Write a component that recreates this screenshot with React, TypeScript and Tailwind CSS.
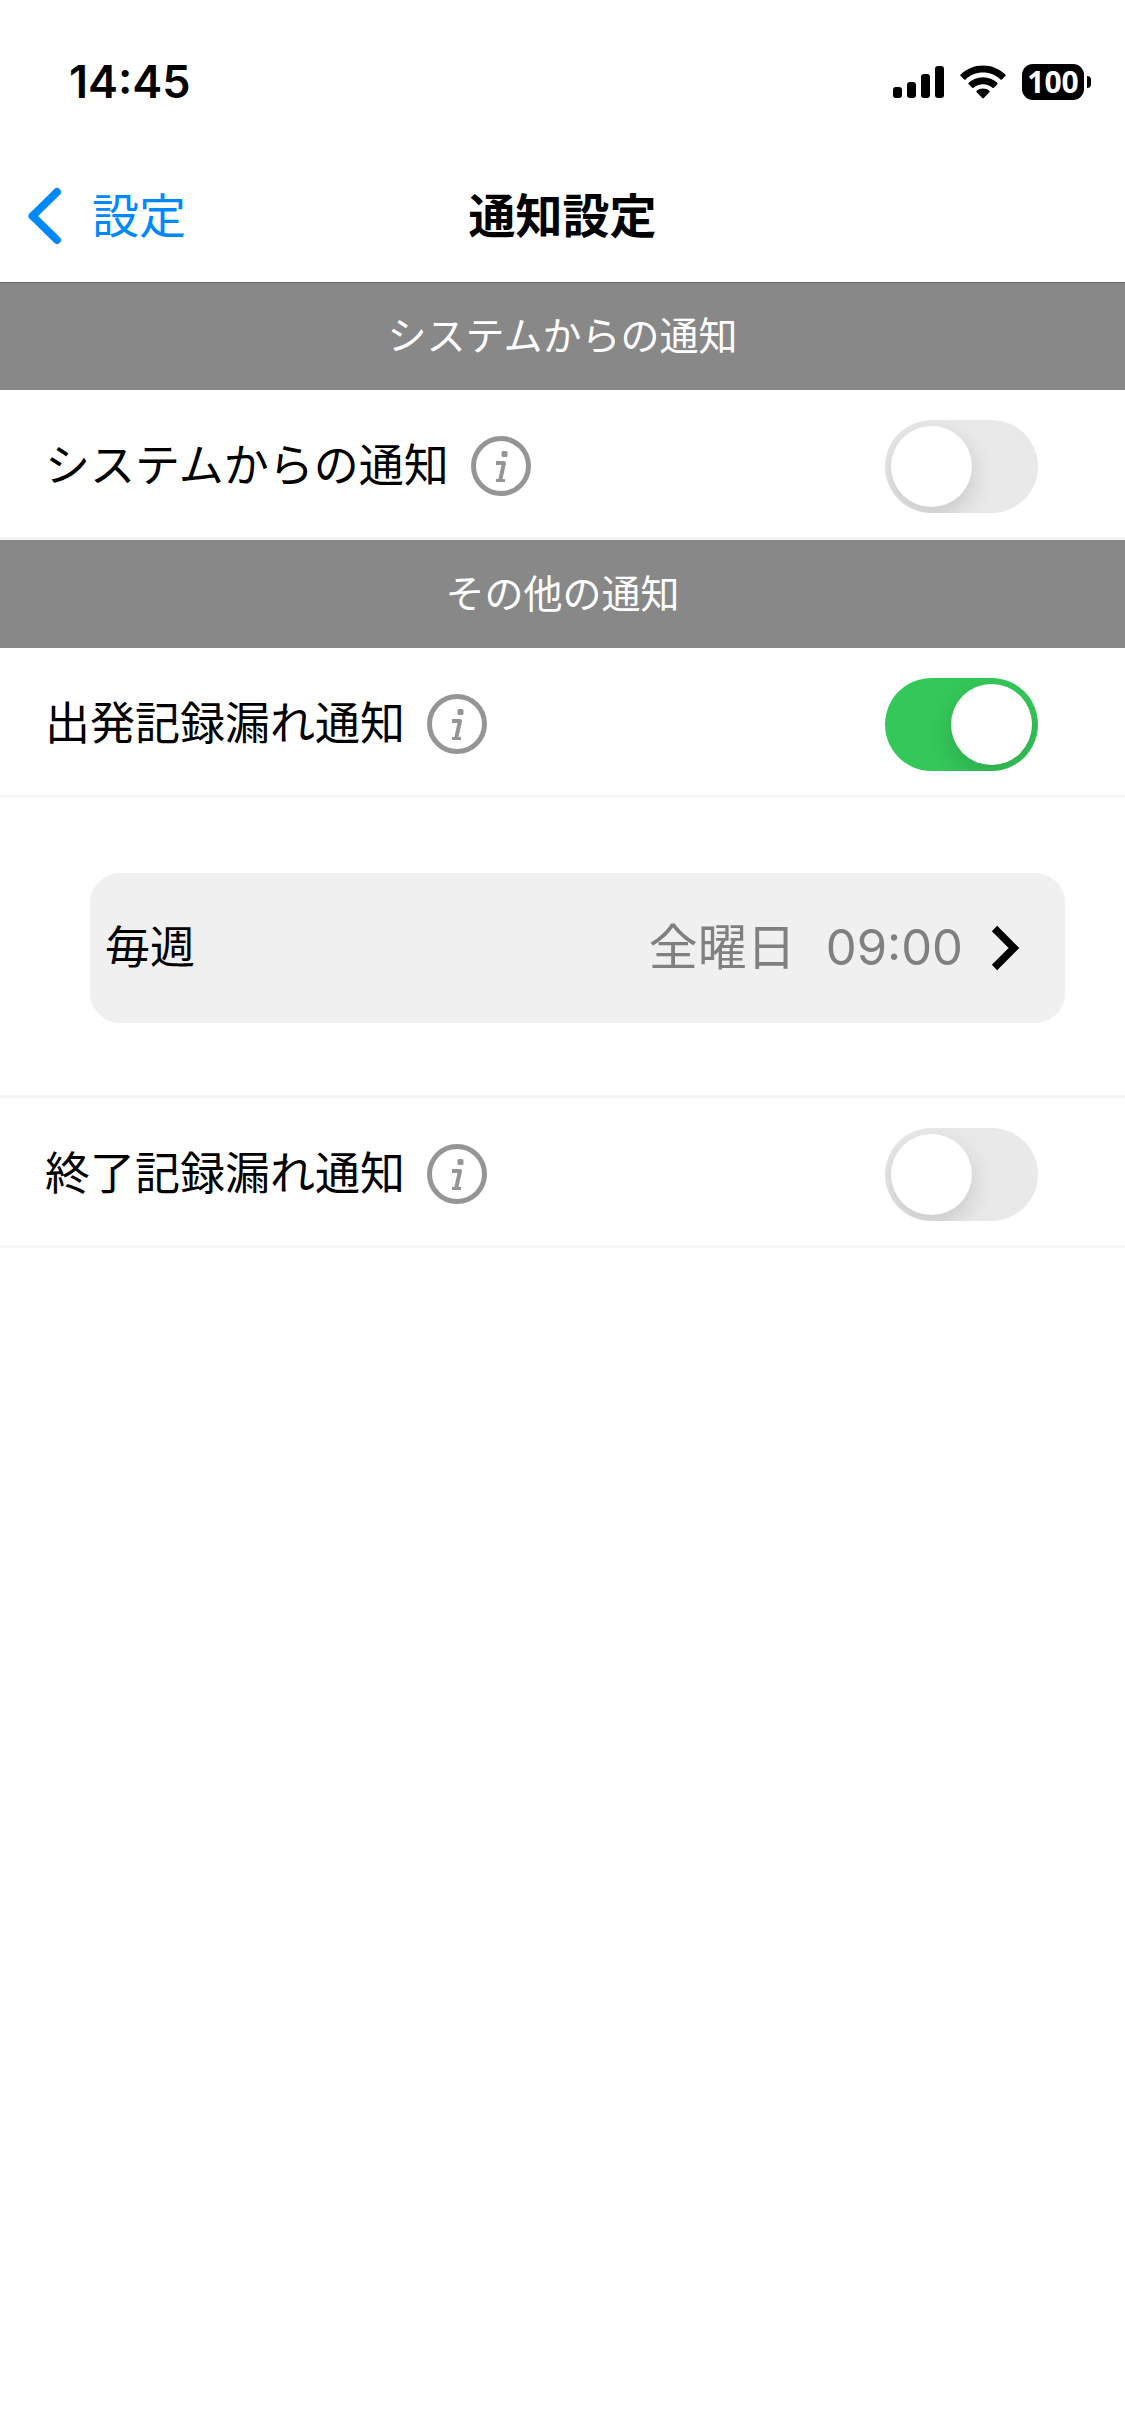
import React, { useId, useState } from 'react';

interface SwitchProps {
  id: string;
  checked: boolean;
  onChange: (checked: boolean) => void;
}

interface SettingRowProps {
  label: string;
  defaultChecked?: boolean;
  children?: React.ReactNode;
}

function SignalIcon() {
  return (
    <svg className="w-[52px] h-[34px]" viewBox="0 0 52 34" aria-hidden="true">
      <rect x="1" y="22" width="9" height="11" rx="3" />
      <rect x="15" y="17" width="9" height="16" rx="3" />
      <rect x="29" y="9" width="9" height="24" rx="3" />
      <rect x="43" y="1" width="9" height="32" rx="3" />
    </svg>
  );
}

function WifiIcon() {
  return (
    <svg className="w-[46px] h-[34px]" viewBox="0 0 46 34" aria-hidden="true">
      <path d="M23 0.5C14.4 0.5 6.500 3.900 0.700 9.500a1 1 0 0 0 0 1.500l3.500 3.500a1 1 0 0 0 1.400 0C10.200 10.200 16.300 7.600 23 7.600s12.800 2.600 17.400 6.900a1 1 0 0 0 1.400 0l3.500-3.500a1 1 0 0 0 0-1.500C39.500 3.900 31.600 0.500 23 0.500Z" />
      <path d="M23 12.200c-5.500 0-10.500 2.100-14.300 5.500a1 1 0 0 0 0 1.500l3.500 3.500a1 1 0 0 0 1.400 0c2.500-2.200 5.800-3.500 9.400-3.500s6.900 1.300 9.400 3.500a1 1 0 0 0 1.400 0l3.500-3.500a1 1 0 0 0 0-1.500C33.500 14.300 28.500 12.200 23 12.200Z" />
      <path d="M23 23.600c-2.400 0-4.600 0.800-6.300 2.200a1 1 0 0 0 0 1.500l5.500 5.700a1.100 1.100 0 0 0 1.600 0l5.500-5.700a1 1 0 0 0 0-1.500c-1.700-1.400-3.900-2.200-6.300-2.200Z" />
    </svg>
  );
}

function Battery() {
  return (
    <div className="flex items-center gap-[3px]">
      <div className="flex h-9 w-[62px] items-center justify-center rounded-[11px] bg-black font-['Open_Sans',sans-serif] text-[30px] leading-9 font-bold text-white">
        100
      </div>
      <div className="h-3 w-1 rounded-r-full bg-black" />
    </div>
  );
}

function StatusBar() {
  return (
    <div className="flex h-[150px] items-center justify-between pt-[14px] pr-[34px] pl-[69px]">
      <span className="text-[45px] leading-[52px] font-semibold">14:45</span>
      <div className="flex items-center gap-4">
        <SignalIcon />
        <WifiIcon />
        <Battery />
      </div>
    </div>
  );
}

function NavBar() {
  return (
    <header className="relative grid h-[132px] grid-cols-[1fr_auto_1fr] items-center shadow-[0_1px_0_#6b6b6b]">
      <a href="#settings" className="flex items-center gap-[30px] pl-7 text-[#0088ff]">
        <svg className="h-[58px] w-[34px]" viewBox="0 0 34 58" fill="none" aria-hidden="true">
          <path
            d="M29 5L4.500 29L29 53"
            stroke="currentColor"
            strokeWidth="8"
            strokeLinecap="round"
            strokeLinejoin="round"
          />
        </svg>
        <span className="text-[47px] leading-[60px]">設定</span>
      </a>
      <h1 className="text-[47px] leading-[60px] font-bold">通知設定</h1>
    </header>
  );
}

function SectionTitle({ children }: { children: React.ReactNode }) {
  return (
    <h2 className="flex h-[108px] items-center justify-center bg-[#888888] text-[39px] leading-[60px] text-white">
      {children}
    </h2>
  );
}

function InfoButton({ label }: { label: string }) {
  return (
    <button type="button" aria-label={`${label}の説明`} className="text-[#959595]">
      <svg className="size-[60px]" viewBox="0 0 60 60" fill="none" aria-hidden="true">
        <circle cx="30" cy="30" r="27.500" stroke="currentColor" strokeWidth="5" />
        <rect x="30.500" y="15" width="6" height="6" rx="1.500" fill="currentColor" />
        <path
          d="M25 27h8l-4 18"
          stroke="currentColor"
          strokeWidth="4"
          strokeLinejoin="round"
        />
        <path d="M25 44.500h9" stroke="currentColor" strokeWidth="3" />
      </svg>
    </button>
  );
}

function Switch({ id, checked, onChange }: SwitchProps) {
  return (
    <input
      id={id}
      type="checkbox"
      role="switch"
      checked={checked}
      onChange={(e) => onChange(e.target.checked)}
      className="h-[93px] w-[153px] cursor-pointer appearance-none overflow-hidden rounded-full bg-[#e9e9e9] p-[6px] before:block before:size-[81px] before:rounded-full before:bg-white before:shadow-[0_9px_24px_rgba(0,0,0,0.15)] checked:bg-[#34c759] checked:before:ml-[60px]"
    />
  );
}

function SettingRow({ label, defaultChecked = false, children }: SettingRowProps) {
  const id = useId();
  const [checked, setChecked] = useState(defaultChecked);

  return (
    <>
      <div className="flex h-[150px] items-center border-b-3 border-[#f5f5f5] pt-[5px] pr-[87px] pl-[45px]">
        <label htmlFor={id} className="text-[45px] leading-[60px]">
          {label}
        </label>
        <div className="ml-[22px] flex flex-1 items-center justify-between">
          <InfoButton label={label} />
          <Switch id={id} checked={checked} onChange={setChecked} />
        </div>
      </div>
      {checked && children}
    </>
  );
}

function ScheduleCard() {
  return (
    <div className="border-b-3 border-[#f5f5f5] pt-[75px] pr-[60px] pb-[72px] pl-[90px]">
      <button
        type="button"
        className="flex h-[150px] w-full items-center rounded-[30px] bg-[#f0f0f0] pr-[44px] pl-[15px]"
      >
        <span className="text-[45px] leading-[60px]">毎週</span>
        <span className="ml-auto flex gap-[30px] text-[49px] leading-[60px] text-[#808080]">
          <span>全曜日</span>
          <span>09:00</span>
        </span>
        <svg className="ml-7 h-[46px] w-[30px]" viewBox="0 0 30 46" fill="none" aria-hidden="true">
          <path d="M3.500 3.500L23 23L3.500 42.500" stroke="currentColor" strokeWidth="7.500" />
        </svg>
      </button>
    </div>
  );
}

export default function App() {
  return (
    <div className="min-h-screen bg-white font-['Inter','Noto_Sans_CJK_JP',sans-serif] text-black">
      <StatusBar />
      <NavBar />
      <main>
        <SectionTitle>システムからの通知</SectionTitle>
        <SettingRow label="システムからの通知" />
        <SectionTitle>その他の通知</SectionTitle>
        <SettingRow label="出発記録漏れ通知" defaultChecked>
          <ScheduleCard />
        </SettingRow>
        <SettingRow label="終了記録漏れ通知" />
      </main>
    </div>
  );
}
